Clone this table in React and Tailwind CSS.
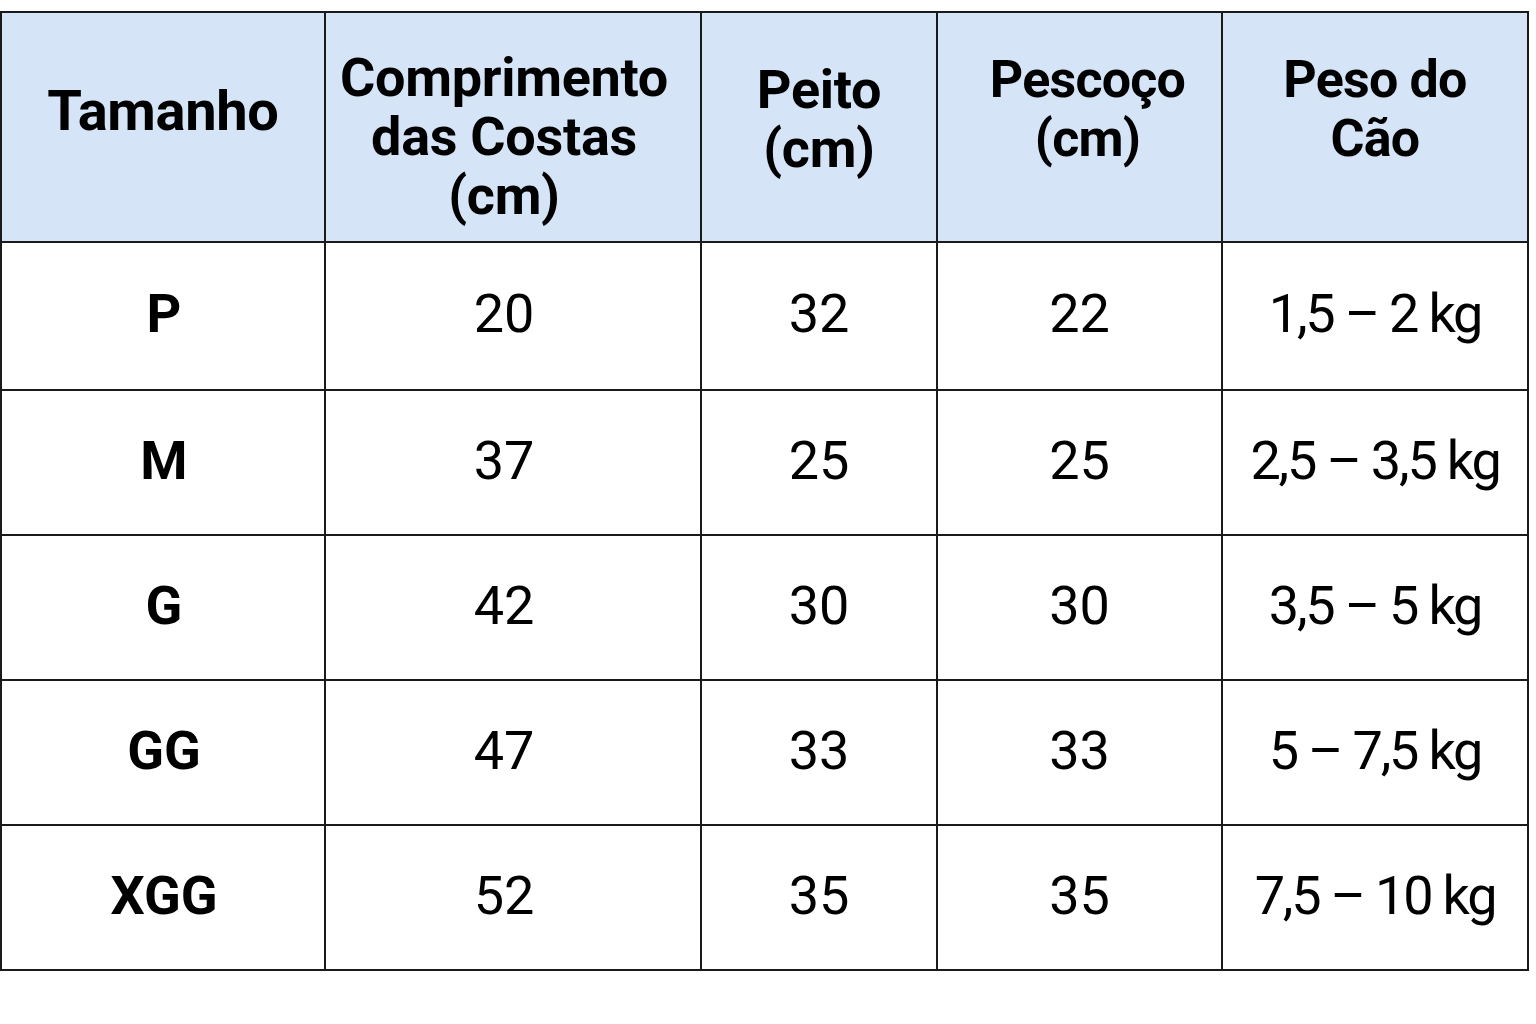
export default function App() {
  const rows = [
    ["P", "20", "32", "22", "1,5 – 2 kg"],
    ["M", "37", "25", "25", "2,5 – 3,5 kg"],
    ["G", "42", "30", "30", "3,5 – 5 kg"],
    ["GG", "47", "33", "33", "5 – 7,5 kg"],
    ["XGG", "52", "35", "35", "7,5 – 10 kg"],
  ];
  const headers = [
    { lines: ["Tamanho"], cls: "w-[324px] pb-[32px] text-[56px] tracking-[-0.3px]" },
    { lines: ["Comprimento", "das Costas", "(cm)"], cls: "w-[376px] pt-[18px] text-[54px] pr-[18px] tracking-[-0.3px]" },
    { lines: ["Peito", "(cm)"], cls: "w-[236px] pb-[16px] text-[54px] tracking-[-0.3px]" },
    { lines: ["Pescoço", "(cm)"], cls: "w-[285px] pb-[36px] text-[52px] pl-[16px] tracking-[-0.8px]" },
    { lines: ["Peso do", "Cão"], cls: "w-[306px] pb-[36px] text-[52px] tracking-[-0.8px]" },
  ];
  const tdCls = [
    "font-bold pl-[2px]",
    "font-normal pr-[18px]",
    "font-normal",
    "font-normal",
    "font-normal tracking-[-2.2px]",
  ];
  return (
    <div className="w-[1536px] h-[1024px] bg-white pt-[11px]" style={{ fontFamily: "Roboto, 'Noto Sans', sans-serif" }}>
      <table className="border-collapse table-fixed w-[1528px] text-black">
        <thead>
          <tr className="h-[230px] bg-[#d5e5f7]">
            {headers.map((h, i) => (
              <th key={i} className={`${h.cls} border-2 border-[#1a1a1a] font-bold leading-[59px] text-center align-middle`}>
                {h.lines.map((l, j) => (
                  <div key={j}>{l}</div>
                ))}
              </th>
            ))}
          </tr>
        </thead>
        <tbody>
          {rows.map((r, ri) => (
            <tr key={ri} className={ri === 0 ? "h-[148px]" : "h-[145px]"}>
              {r.map((c, ci) => (
                <td
                  key={ci}
                  className={`border-2 border-[#1a1a1a] text-center align-middle text-[54px] pb-[5px] ${tdCls[ci]}`}
                >
                  {c}
                </td>
              ))}
            </tr>
          ))}
        </tbody>
      </table>
    </div>
  );
}
